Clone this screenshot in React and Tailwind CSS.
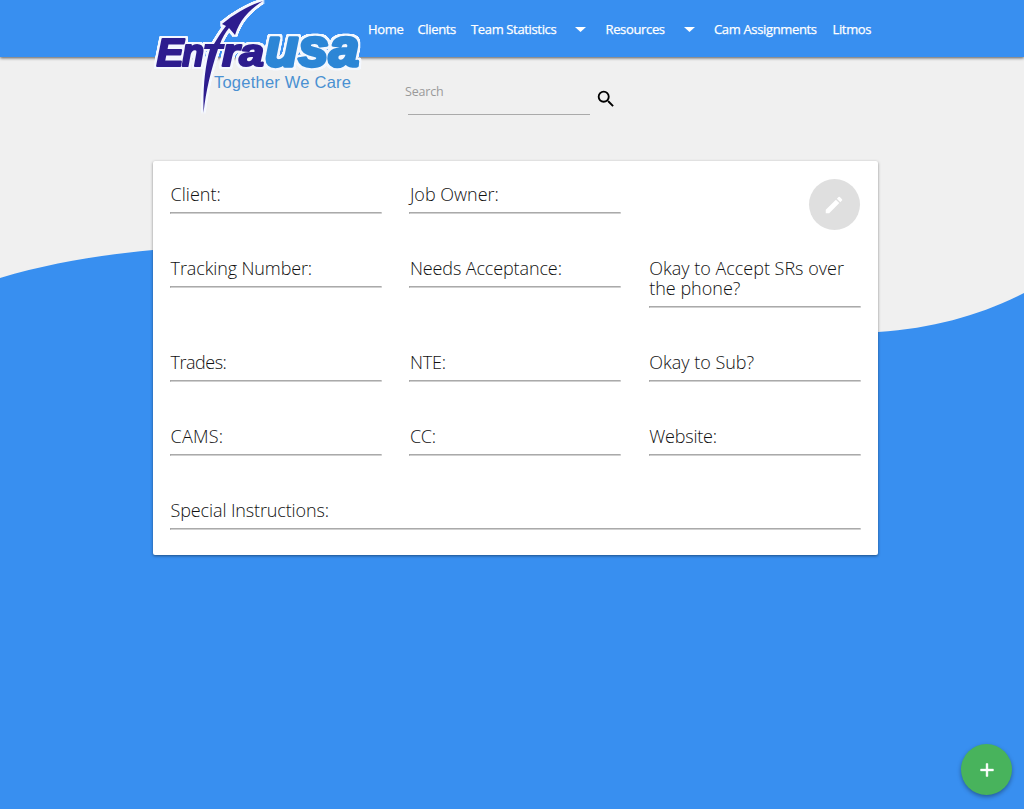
import React from 'react';

const navItems = [
  { label: 'Home', cls: 'w-[35px]' },
  { label: 'Clients', cls: 'w-[39px]' },
  { label: 'Team Statistics', cls: 'w-[85px]', menu: true },
  { label: 'Resources', cls: 'w-[59px]', menu: true },
  { label: 'Cam Assignments', cls: 'w-[104px]' },
  { label: 'Litmos', cls: 'w-[39px]' },
];

const ARROW =
  'M263 1C249 5 234 14 222 24L226 26C221 32 217 39 214 44H205L204 49H210C205 66 203 86 203.5 113C206 90 211 70 218 49H224L225 44H220C222 38 225 33 229 28L235 35C240 19 250 9 263 1Z';

const wordmark = [
  { text: 'E', x: 156.5, size: 39, length: 27, fill: '#2d1d8f', weight: 2.2 },
  { text: 'n', x: 182, size: 39, length: 22, fill: '#2d1d8f', weight: 2.2 },
  { text: 'ra', x: 222, size: 39, length: 42, fill: '#2d1d8f', weight: 2.2 },
  { text: 'usa', x: 265, size: 54, length: 94, fill: '#2c86d6', weight: 3.4 },
];

function Logo() {
  return (
    <svg className="block h-[118px] w-[212px]" viewBox="153 0 212 118">
      <defs>
        <filter id="outline" x="-5%" y="-5%" width="110%" height="110%" colorInterpolationFilters="sRGB">
          <feMorphology in="SourceAlpha" operator="dilate" radius="1.6" result="grown" />
          <feGaussianBlur in="grown" stdDeviation="0.6" result="soft" />
          <feComponentTransfer in="soft" result="edge">
            <feFuncA type="linear" slope="2" />
          </feComponentTransfer>
          <feFlood floodColor="#f4f8ff" />
          <feComposite in2="edge" operator="in" result="halo" />
          <feMerge>
            <feMergeNode in="halo" />
            <feMergeNode in="SourceGraphic" />
          </feMerge>
        </filter>
      </defs>
      <g
        fontFamily="'Liberation Sans', Arial, sans-serif"
        fontWeight="bold"
        fontStyle="italic"
        strokeLinejoin="round"
        filter="url(#outline)"
      >
        {wordmark.map((item) => (
          <text
            key={item.text}
            x={item.x}
            y="66"
            fontSize={item.size}
            textLength={item.length}
            lengthAdjust="spacingAndGlyphs"
            fill={item.fill}
            stroke={item.fill}
            strokeWidth={item.weight}
          >
            {item.text}
          </text>
        ))}
        <path d={ARROW} fill="#2d1d8f" />
      </g>
      <text
        x="214"
        y="88"
        fontFamily="'Liberation Sans', Arial, sans-serif"
        fontSize="16.5"
        textLength="137"
        fill="#4a90d2"
      >
        Together We Care
      </text>
    </svg>
  );
}

function Field({ label, track = 'tracking-[0px]', wide }) {
  return (
    <div className={wide ? 'col-span-3' : ''}>
      <div className={`pl-[0.6px] text-[18px] leading-5 font-light whitespace-pre text-[#111] ${track}`}>{label}</div>
      <div className="mt-[8px] h-[2px] border border-t-[#aaaaaa] border-r-[#e4e4e4] border-b-[#d0d0d0] border-l-[#a0a0a0]" />
    </div>
  );
}

export default function App() {
  return (
    <div className="relative isolate flex h-[809px] w-[1024px] flex-col overflow-hidden bg-[#388ff0] font-['Open_Sans','Noto_Sans',sans-serif]">
      <svg className="absolute inset-0 -z-10 h-[809px] w-[1024px]" viewBox="0 0 1024 809">
        <path d="M0 0H1024V293C980 315 935 328 878 332C640 350 420 225 153 250C100 255 50 263 0 278Z" fill="#f0f0f0" />
      </svg>

      <header className="flex h-[57px] shrink-0 bg-[#388ff0] pl-[153px] shadow-[0_1px_3px_rgba(0,0,0,0.65)]">
        <div className="w-[212px] shrink-0">
          <Logo />
        </div>
        <nav className="flex h-[59px] items-center gap-[14.5px] pl-[3px] text-[13px] text-white">
          {navItems.map((item) => (
            <a key={item.label} className="flex items-center">
              <span className={`font-medium tracking-[-0.35px] whitespace-nowrap [-webkit-text-stroke:0.25px_white] ${item.cls}`}>
                {item.label}
              </span>
              {item.menu && (
                <svg className="mr-[5px] ml-[19px] h-[5px] w-[11px]" viewBox="0 0 11 5">
                  <path d="M0 0H11L5.5 5Z" fill="white" />
                </svg>
              )}
            </a>
          ))}
        </nav>
      </header>

      <div className="flex h-[104px] shrink-0 pl-[405px]">
        <div className="w-[185px] pt-[26px]">
          <div className="text-[12.5px] leading-[18px] tracking-[-0.2px] text-[#9a9a9a]">Search</div>
          <div className="mt-[13px] ml-[3px] h-px bg-[#aaa]" />
        </div>
        <svg className="mt-[31px] ml-[5px] size-[22px]" viewBox="0 0 24 24" fill="black">
          <path d="M15.5 14h-.79l-.28-.27A6.471 6.471 0 0 0 16 9.5 6.5 6.5 0 1 0 9.5 16c1.61 0 3.09-.59 4.23-1.57l.27.28v.79l5 4.99L20.49 19l-4.99-5zm-6 0C7.01 14 5 11.99 5 9.5S7.01 5 9.5 5 14 7.01 14 9.5 11.99 14 9.5 14z" />
        </svg>
      </div>

      <main className="ml-[153px] h-[394px] w-[725px] shrink-0 rounded-[2px] bg-white px-[17px] pt-[23px] shadow-[0_1px_3px_rgba(0,0,0,0.45)]">
        <div className="grid grid-cols-[212px_212px_212px] grid-rows-[74.4px_93.6px_74.4px_73.6px_30px] gap-x-[27.3px]">
          <Field label="Client:" />
          <Field label="Job Owner:" />
          <div className="flex justify-end">
            <button className="-mt-[5px] mr-px flex size-[51px] items-center justify-center rounded-full bg-[#dfdfdf]">
              <svg className="size-[22px]" viewBox="0 0 24 24" fill="white">
                <path d="M3 17.25V21h3.75L17.81 9.94l-3.75-3.75L3 17.25zM20.71 7.04a1 1 0 0 0 0-1.41l-2.34-2.34a1 1 0 0 0-1.41 0l-1.83 1.83 3.75 3.75 1.83-1.83z" />
              </svg>
            </button>
          </div>
          <Field label="Tracking Number:" track="tracking-[-0.12px]" />
          <Field label="Needs Acceptance:" track="tracking-[-0.12px]" />
          <Field label={'Okay to Accept SRs over\nthe phone?'} />
          <Field label="Trades:" track="tracking-[-0.5px]" />
          <Field label="NTE:" track="tracking-[-0.2px]" />
          <Field label="Okay to Sub?" />
          <Field label="CAMS:" track="tracking-[0.2px]" />
          <Field label="CC:" track="tracking-[-0.2px]" />
          <Field label="Website:" track="tracking-[-0.2px]" />
          <Field label="Special Instructions:" track="tracking-[-0.13px]" wide />
        </div>
      </main>

      <button className="absolute right-[12px] bottom-[14px] flex size-[51px] items-center justify-center rounded-full bg-[#48b35c] shadow-[0_2px_4px_rgba(0,0,0,0.35)]">
        <svg className="size-[22px]" viewBox="0 0 24 24" fill="white" stroke="white" strokeWidth="0.5">
          <path d="M19 13h-6v6h-2v-6H5v-2h6V5h2v6h6v2z" />
        </svg>
      </button>
    </div>
  );
}
